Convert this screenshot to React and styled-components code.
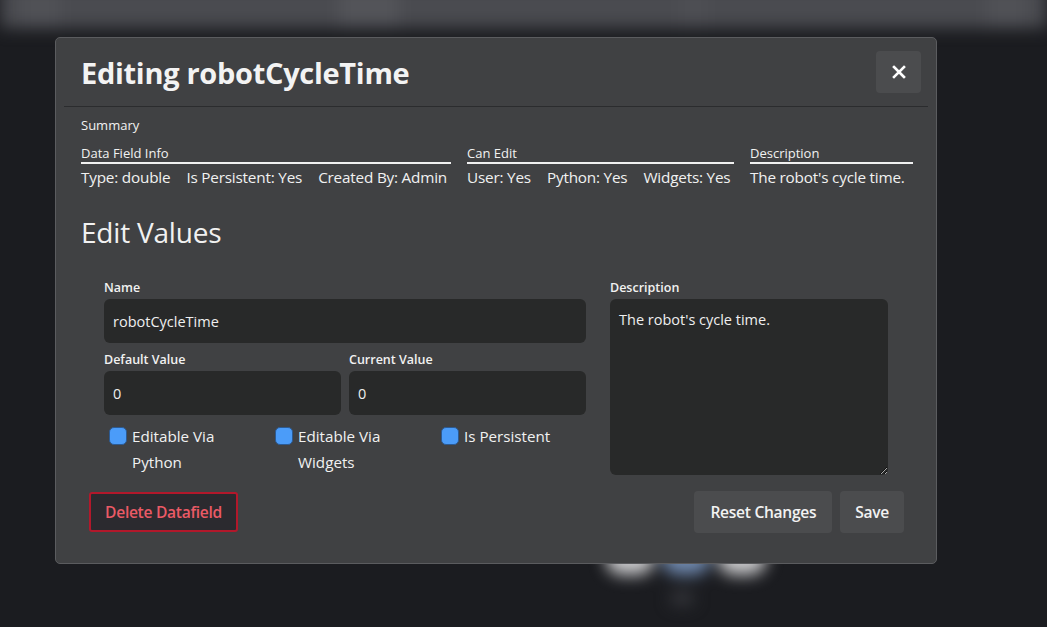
import React from "react";
import styled, { createGlobalStyle } from "styled-components";

const Global = createGlobalStyle`
  html, body { margin: 0; padding: 0; }
  body {
    background: #1b1c20;
    font-family: "Open Sans", "Noto Sans", sans-serif;
    color: #f1f1f1;
    width: 1047px;
    height: 627px;
    overflow: hidden;
  }
`;

const Page = styled.div`
  position: relative;
  width: 1047px;
  height: 627px;
  overflow: hidden;
`;

const Backdrop = styled.div`
  display: flex;
  flex-direction: column;
  height: 100%;
  filter: blur(8px);
  margin-top: -16px;
`;

const TopBar = styled.div`
  height: 44px;
  background: #4a4b50;
  display: flex;
  justify-content: space-between;
  padding: 0 20px;
`;

const BarSpot = styled.div`
  width: ${(p) => p.w}px;
  height: 44px;
  background: ${(p) => p.c};
`;

const BlobRow = styled.div`
  margin-top: 501px;
  margin-left: 606px;
  display: flex;
  gap: 8px;
`;

const Blob = styled.div`
  width: 48px;
  height: 46px;
  border-radius: 16px;
  background: ${(p) => p.c};
`;

const SmallBlob = styled.div`
  margin-top: 16px;
  margin-left: 670px;
  width: 24px;
  height: 14px;
  border-radius: 7px;
  background: #36373c;
`;

const Modal = styled.div`
  position: absolute;
  left: 55px;
  top: 37px;
  width: 880px;
  height: 525px;
  background: #404143;
  border: 1px solid #5b5c5f;
  border-radius: 5px;
  display: flex;
  flex-direction: column;
`;

const Header = styled.div`
  margin: 0 8px;
  height: 68px;
  border-bottom: 1px solid #2b2c2e;
  display: flex;
  align-items: center;
  justify-content: space-between;
  padding: 0 7px 0 17px;
`;

const Title = styled.h1`
  margin: 0;
  font-size: 29px;
  font-weight: 700;
  letter-spacing: -0.3px;
  color: #f3f3f3;
  padding-top: 1px;
`;

const CloseButton = styled.button`
  width: 45px;
  height: 42px;
  border: none;
  border-radius: 4px;
  background: #4b4c4e;
  display: flex;
  align-items: center;
  justify-content: center;
  padding: 0;
  margin-top: -1px;
`;

const Body = styled.div`
  padding: 9px 25px 0 25px;
  display: flex;
  flex-direction: column;
`;

const SummaryLabel = styled.div`
  font-size: 13px;
  line-height: 18px;
`;

const SummaryGrid = styled.div`
  display: grid;
  grid-template-columns: 370px 267px 163px;
  column-gap: 16px;
  margin-top: 10px;
`;

const InfoGroup = styled.div`
  display: flex;
  flex-direction: column;
`;

const GroupHeading = styled.div`
  font-size: 13px;
  line-height: 18px;
  border-bottom: 2px solid #f0f0f0;
`;

const ItemRow = styled.div`
  display: flex;
  gap: 16px;
  font-size: 15.3px;
  line-height: 26px;
  white-space: nowrap;
  letter-spacing: -0.2px;
`;

const SectionTitle = styled.h2`
  margin: 22px 0 0;
  font-size: 28px;
  font-weight: 400;
  line-height: 40px;
  letter-spacing: -0.2px;
`;

const FormGrid = styled.div`
  display: grid;
  grid-template-columns: 482px 278px;
  column-gap: 24px;
  margin: 26px 0 0 23px;
`;

const Column = styled.div`
  display: flex;
  flex-direction: column;
`;

const Label = styled.label`
  font-size: 12.5px;
  font-weight: 600;
  line-height: 18px;
  display: block;
  margin-bottom: 2px;
  padding-top: 1px;
`;

const Field = styled.div`
  display: flex;
  flex-direction: column;
`;

const Pair = styled.div`
  display: grid;
  grid-template-columns: 1fr 1fr;
  column-gap: 8px;
  margin-top: 7px;
`;

const Input = styled.input`
  height: 44px;
  box-sizing: border-box;
  border: none;
  border-radius: 6px;
  background: #282929;
  color: #efefef;
  font-family: inherit;
  font-size: 14.5px;
  padding: 0 9px;
  outline: none;
`;

const TextArea = styled.textarea`
  height: 176px;
  box-sizing: border-box;
  border: none;
  border-radius: 6px;
  background: #282929;
  color: #efefef;
  font-family: inherit;
  font-size: 14.5px;
  padding: 11px 9px;
  outline: none;
  resize: vertical;
`;

const Checks = styled.div`
  display: grid;
  grid-template-columns: repeat(3, 166px);
  padding-left: 5px;
  margin-top: 8px;
`;

const CheckItem = styled.label`
  display: flex;
  align-items: flex-start;
  gap: 5px;
  font-size: 15.2px;
  line-height: 26px;
  width: 140px;
`;

const Box = styled.span`
  flex: none;
  width: 18px;
  height: 18px;
  margin-top: 4px;
  box-sizing: border-box;
  border-radius: 5px;
  background: #4b9cf9;
  border: 1px solid #2c5a92;
`;

const Footer = styled.div`
  display: flex;
  align-items: center;
  justify-content: space-between;
  margin: 16px 32px 0 33px;
`;

const ButtonGroup = styled.div`
  display: flex;
  gap: 8px;
`;

const DangerButton = styled.button`
  height: 40px;
  width: 149px;
  box-sizing: border-box;
  background: #2b2a2f;
  border: 2px solid #b2182b;
  border-radius: 3px;
  color: #ea5a66;
  font-family: inherit;
  font-size: 15.6px;
  font-weight: 600;
  letter-spacing: -0.3px;
  padding: 0;
`;

const Button = styled.button`
  height: 42px;
  padding: 0 ${(p) => p.px || 16}px;
  border: none;
  border-radius: 4px;
  background: #4b4c4e;
  color: #f2f2f2;
  font-family: inherit;
  font-size: 15.6px;
  font-weight: 600;
  letter-spacing: -0.3px;
`;

export default function App() {
  return (
    <Page>
      <Global />
      <Backdrop>
        <TopBar>
          <BarSpot w={40} c="#505156" />
          <BarSpot w={60} c="#535459" />
          <BarSpot w={30} c="#4d4e53" />
          <BarSpot w={40} c="#505156" />
        </TopBar>
        <BlobRow>
          <Blob c="#c9c9cb" />
          <Blob c="#6f88ad" />
          <Blob c="#c9c9cb" />
        </BlobRow>
        <SmallBlob />
      </Backdrop>

      <Modal>
        <Header>
          <Title>Editing robotCycleTime</Title>
          <CloseButton aria-label="Close">
            <svg width="14" height="14" viewBox="0 0 14 14">
              <path d="M2 2 L12 12 M12 2 L2 12" stroke="#fff" strokeWidth="2.6" strokeLinecap="square" />
            </svg>
          </CloseButton>
        </Header>
        <Body>
          <SummaryLabel>Summary</SummaryLabel>
          <SummaryGrid>
            <InfoGroup>
              <GroupHeading>Data Field Info</GroupHeading>
              <ItemRow>
                <span>Type: double</span>
                <span>Is Persistent: Yes</span>
                <span>Created By: Admin</span>
              </ItemRow>
            </InfoGroup>
            <InfoGroup>
              <GroupHeading>Can Edit</GroupHeading>
              <ItemRow>
                <span>User: Yes</span>
                <span>Python: Yes</span>
                <span>Widgets: Yes</span>
              </ItemRow>
            </InfoGroup>
            <InfoGroup>
              <GroupHeading>Description</GroupHeading>
              <ItemRow>
                <span>The robot's cycle time.</span>
              </ItemRow>
            </InfoGroup>
          </SummaryGrid>

          <SectionTitle>Edit Values</SectionTitle>

          <FormGrid>
            <Column>
              <Field>
                <Label>Name</Label>
                <Input defaultValue="robotCycleTime" />
              </Field>
              <Pair>
                <Field>
                  <Label>Default Value</Label>
                  <Input defaultValue="0" />
                </Field>
                <Field>
                  <Label>Current Value</Label>
                  <Input defaultValue="0" />
                </Field>
              </Pair>
              <Checks>
                <CheckItem>
                  <Box />
                  <span>Editable Via Python</span>
                </CheckItem>
                <CheckItem>
                  <Box />
                  <span>Editable Via Widgets</span>
                </CheckItem>
                <CheckItem>
                  <Box />
                  <span>Is Persistent</span>
                </CheckItem>
              </Checks>
            </Column>
            <Column>
              <Field>
                <Label>Description</Label>
                <TextArea defaultValue="The robot's cycle time." />
              </Field>
            </Column>
          </FormGrid>
        </Body>
        <Footer>
          <DangerButton>Delete Datafield</DangerButton>
          <ButtonGroup>
            <Button px={16}>Reset Changes</Button>
            <Button px={15}>Save</Button>
          </ButtonGroup>
        </Footer>
      </Modal>
    </Page>
  );
}
